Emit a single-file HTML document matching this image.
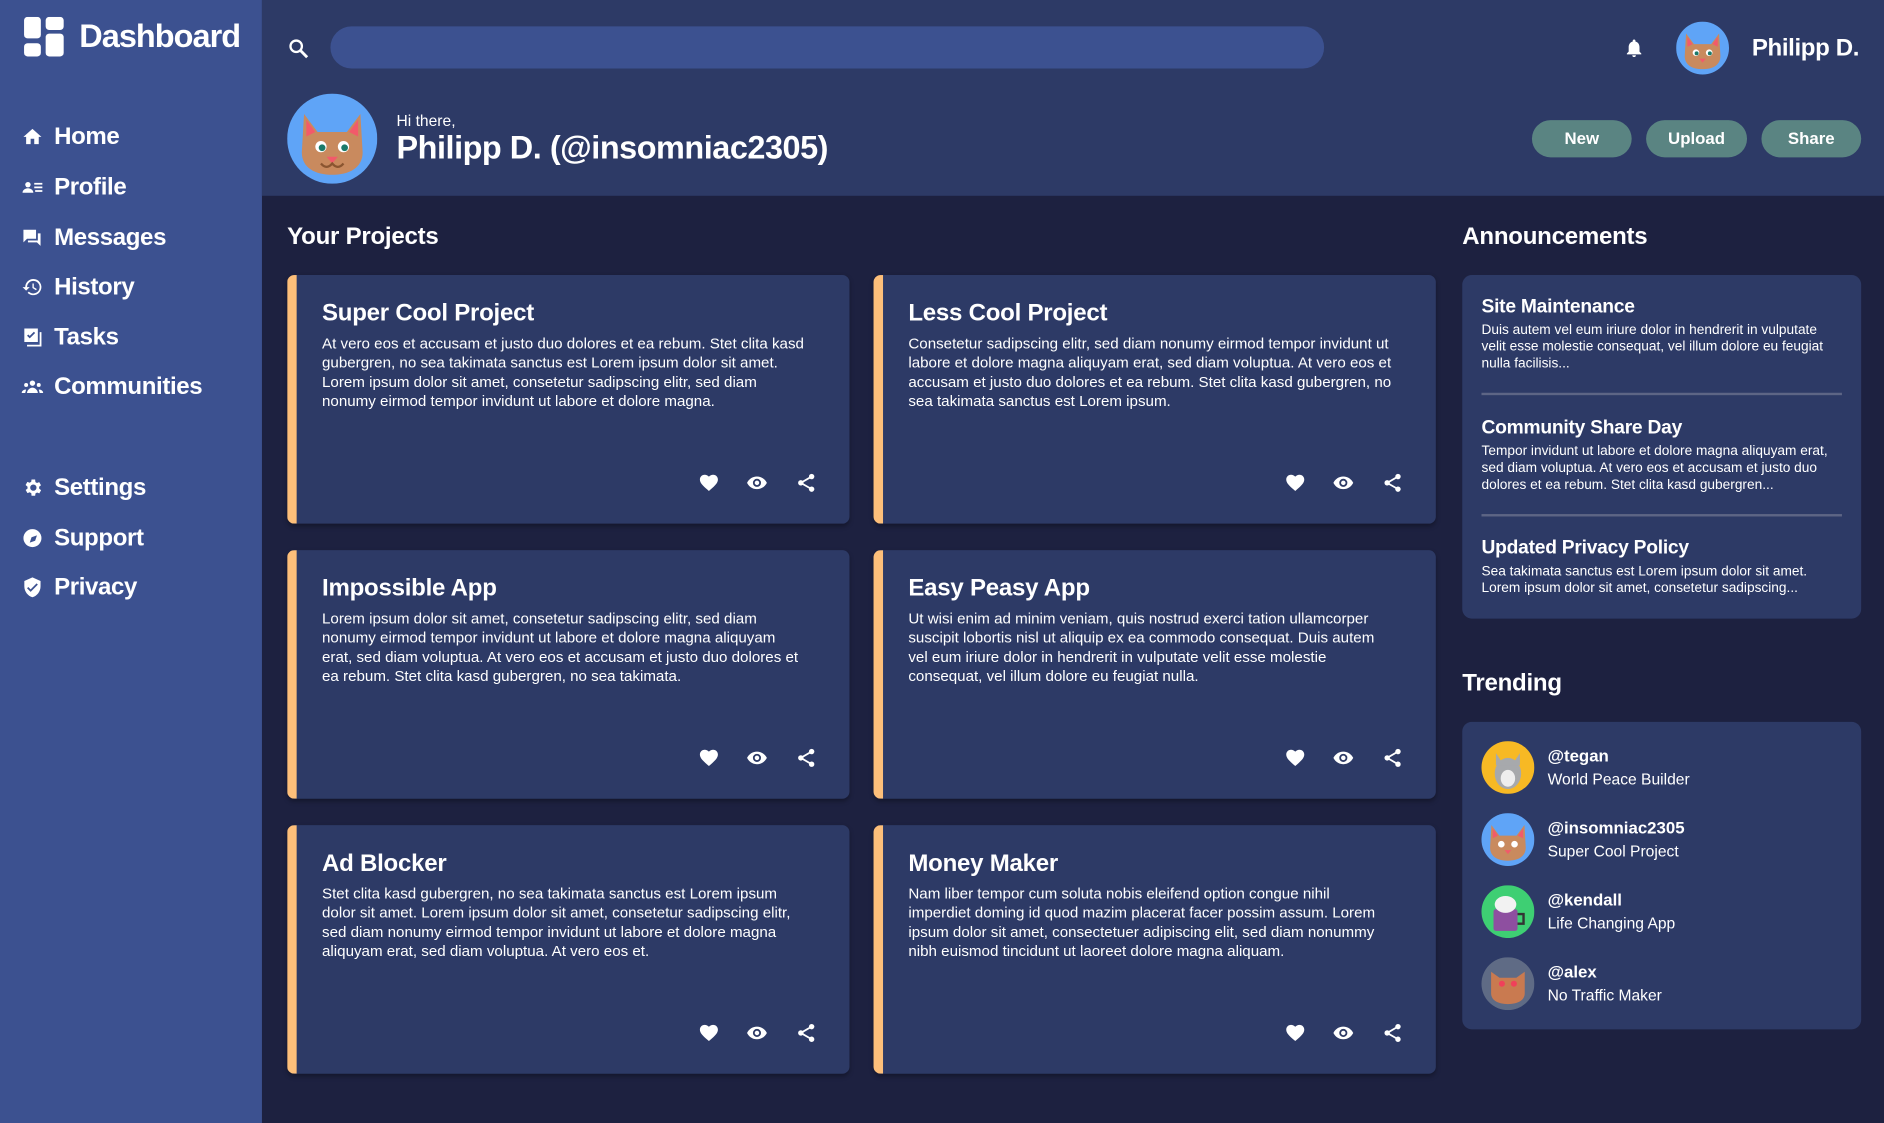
<!DOCTYPE html>
<html><head><meta charset="utf-8"><style>
html,body{margin:0;padding:0;width:1884px;height:1123px;overflow:hidden;background:#1d2140;}
#w{position:absolute;left:0;top:0;width:1568px;height:935px;transform:scale(1.20153,1.2011);transform-origin:0 0;font-family:"Liberation Sans",sans-serif;color:#fff;background:#1d2140;}
.a{position:absolute;}
#side{left:0;top:0;width:218px;height:935px;background:#3c5190;}
.nav{position:absolute;left:18px;font-size:20px;font-weight:bold;display:flex;align-items:center;height:24px;letter-spacing:-0.3px;}
.nav svg{width:18px;height:18px;margin-right:9px;fill:#fff;}
#head{left:218px;top:0;width:1350px;height:163px;background:#2d3a66;}
.btn{position:absolute;top:100px;height:31px;border-radius:16px;background:#5a8482;font-size:14px;font-weight:bold;text-align:center;line-height:31px;}
.card{position:absolute;width:460px;height:207px;background:#2d3a66;border-radius:6px;border-left:8px solid #fdbf7a;box-shadow:0 2px 4px rgba(0,0,0,.3);}
.card h3{margin:0;position:absolute;left:21px;top:21px;font-size:20px;letter-spacing:-0.2px;}
.card p{margin:0;position:absolute;left:21px;top:49px;width:405px;font-size:12.6px;line-height:16px;}
.ic{position:absolute;top:164px;width:18px;height:18px;fill:#fff;}
.h2{position:absolute;font-size:20px;font-weight:bold;letter-spacing:-0.2px;}
.panel{position:absolute;left:1217px;width:332px;background:#2d3a66;border-radius:8px;}
.an{position:absolute;left:16px;width:290px;}
.an b{font-size:16px;display:block;letter-spacing:-0.2px;}
.an span{font-size:11.4px;line-height:14px;display:block;margin-top:3px;}
.hr{position:absolute;left:16px;width:300px;height:2px;background:#5d6585;}
.tr{position:absolute;left:16px;height:44px;}
.tr .t{position:absolute;left:55px;top:4px;font-size:14px;font-weight:bold;white-space:nowrap;}
.tr .s{position:absolute;left:55px;top:24px;font-size:13px;white-space:nowrap;}
</style></head><body><div id="w">
<div id="side" class="a">
 <svg class="a" style="left:20px;top:14px" width="34" height="33" viewBox="0 0 34 33"><rect x="0" y="0" width="14" height="18" rx="3" fill="#fff"/><rect x="18" y="0" width="15" height="11" rx="3" fill="#fff"/><rect x="0" y="22" width="14" height="11" rx="3" fill="#fff"/><rect x="18" y="14" width="15" height="19" rx="3" fill="#fff"/></svg>
 <div class="a" style="left:66px;top:15px;font-size:27px;font-weight:bold;letter-spacing:-0.8px">Dashboard</div>
 <div class="nav" style="top:102px"><svg viewBox="0 0 24 24"><path d="M10 20v-6h4v6h5v-8h3L12 3 2 12h3v8z"/></svg>Home</div>
 <div class="nav" style="top:144px"><svg viewBox="0 0 24 24"><circle cx="7" cy="9" r="3"/><path d="M1 18c0-3 3-5 6-5s6 2 6 5zM14 7h9v2h-9zM14 11h9v2h-9zM15 15h8v2h-8z"/></svg>Profile</div>
 <div class="nav" style="top:186px"><svg viewBox="0 0 24 24"><path d="M2 3h14v10H6l-4 4zM18 7h3v14l-4-4H7v-2h11z"/></svg>Messages</div>
 <div class="nav" style="top:227px"><svg viewBox="0 0 24 24"><path d="M13 3a9 9 0 0 0-9 9H1l4 4 4-4H6a7 7 0 1 1 2 5l-1.4 1.4A9 9 0 1 0 13 3zm-1 5v5l4 2.5.8-1.3-3.3-2V8z"/></svg>History</div>
 <div class="nav" style="top:269px"><svg viewBox="0 0 24 24"><path d="M3 2h15v15H3zM6 10l3 3 6-6-1.4-1.4L9 10.2 7.4 8.6zM20 6h2v16H6v-2h14z"/></svg>Tasks</div>
 <div class="nav" style="top:310px"><svg viewBox="0 0 24 24"><circle cx="12" cy="8" r="3"/><circle cx="5" cy="10" r="2.2"/><circle cx="19" cy="10" r="2.2"/><path d="M6 19c0-3 3-6 6-6s6 3 6 6zM0 19c0-2 2-4 5-4l-1 4zM24 19c0-2-2-4-5-4l1 4z"/></svg>Communities</div>
 <div class="nav" style="top:394px"><svg viewBox="0 0 24 24"><path d="M19.4 13a7.5 7.5 0 0 0 0-2l2.1-1.6-2-3.5-2.5 1a7 7 0 0 0-1.7-1L15 3h-4l-.4 2.6a7 7 0 0 0-1.7 1l-2.5-1-2 3.5L6.6 11a7.5 7.5 0 0 0 0 2l-2.1 1.6 2 3.5 2.5-1a7 7 0 0 0 1.7 1L11 21h4l.4-2.6a7 7 0 0 0 1.7-1l2.5 1 2-3.5zM13 15.5a3.5 3.5 0 1 1 0-7 3.5 3.5 0 0 1 0 7z"/></svg>Settings</div>
 <div class="nav" style="top:436px"><svg viewBox="0 0 24 24"><path d="M12 2a10 10 0 1 0 0 20 10 10 0 0 0 0-20zm3 13-6 2 2-6 6-2z"/></svg>Support</div>
 <div class="nav" style="top:477px"><svg viewBox="0 0 24 24"><path d="M12 1 3 5v6c0 5.5 3.8 10.7 9 12 5.2-1.3 9-6.5 9-12V5zm-2 16-4-4 1.4-1.4L10 14.2l6.6-6.6L18 9z"/></svg>Privacy</div>
</div>
<div id="head" class="a"></div>
<svg class="a" style="left:239px;top:31px" width="19" height="19" viewBox="0 0 24 24"><circle cx="9.5" cy="9.5" r="6" stroke="#fff" stroke-width="2.4" fill="none"/><path d="M14 14l7 7" stroke="#fff" stroke-width="3"/></svg>
<div class="a" style="left:275px;top:22px;width:827px;height:35px;border-radius:18px;background:#3c5190"></div>
<svg class="a" style="left:1351px;top:30px" width="18" height="20" viewBox="0 0 24 24" fill="#fff"><path d="M12 22a2 2 0 0 0 2-2h-4a2 2 0 0 0 2 2zm6-6v-5c0-3-1.6-5.6-4.5-6.3V4a1.5 1.5 0 0 0-3 0v.7C7.6 5.4 6 8 6 11v5l-2 2v1h16v-1z"/></svg>
<svg class="a" style="left:1395px;top:18px" width="44" height="44" viewBox="0 0 80 80"><circle cx="40" cy="40" r="40" fill="#5fa4f7"/><path d="M15 18l12 16 26 0 12-16 2 34c0 14-12 20-27 20S13 66 13 52z" fill="#c98a5e"/><path d="M17 23l8 11-8 4zM63 23l-8 11 8 4z" fill="#f25a6a"/><circle cx="30" cy="47" r="5" fill="#fff"/><circle cx="50" cy="47" r="5" fill="#fff"/><circle cx="31" cy="48" r="3" fill="#1a7a6a"/><circle cx="51" cy="48" r="3" fill="#1a7a6a"/><path d="M35 56h10l-5 6z" fill="#f25a6a"/></svg>
<div class="a" style="left:1458px;top:29px;font-size:20px;font-weight:bold;letter-spacing:-0.3px">Philipp D.</div>
<svg class="a" style="left:239px;top:78px" width="75" height="75" viewBox="0 0 80 80"><circle cx="40" cy="40" r="40" fill="#5fa4f7"/><path d="M15 18l12 16 26 0 12-16 2 34c0 14-12 20-27 20S13 66 13 52z" fill="#c98a5e"/><path d="M17 23l8 11-8 4zM63 23l-8 11 8 4z" fill="#f25a6a"/><circle cx="30" cy="47" r="5" fill="#fff"/><circle cx="50" cy="47" r="5" fill="#fff"/><circle cx="31" cy="48" r="3" fill="#1a7a6a"/><circle cx="51" cy="48" r="3" fill="#1a7a6a"/><path d="M35 56h10l-5 6z" fill="#f25a6a"/><path d="M30 62q5 6 10 0q5 6 10 0" stroke="#8a5530" stroke-width="2" fill="none"/></svg>
<div class="a" style="left:330px;top:93px;font-size:13px">Hi there,</div>
<div class="a" style="left:330px;top:108px;font-size:27px;font-weight:bold;letter-spacing:-0.4px">Philipp D. (@insomniac2305)</div>
<div class="btn" style="left:1275px;width:83px">New</div>
<div class="btn" style="left:1370px;width:84px">Upload</div>
<div class="btn" style="left:1466px;width:83px">Share</div>

<div class="h2" style="left:239px;top:186px">Your Projects</div>
<div class="h2" style="left:1217px;top:186px">Announcements</div>
<div class="h2" style="left:1217px;top:558px">Trending</div>

<div class="card" style="left:239px;top:229px"><h3>Super Cool Project</h3><p>At vero eos et accusam et justo duo dolores et ea rebum. Stet clita kasd gubergren, no sea takimata sanctus est Lorem ipsum dolor sit amet. Lorem ipsum dolor sit amet, consetetur sadipscing elitr, sed diam nonumy eirmod tempor invidunt ut labore et dolore magna.</p>ICONS</div>
<div class="card" style="left:727px;top:229px"><h3>Less Cool Project</h3><p>Consetetur sadipscing elitr, sed diam nonumy eirmod tempor invidunt ut labore et dolore magna aliquyam erat, sed diam voluptua. At vero eos et accusam et justo duo dolores et ea rebum. Stet clita kasd gubergren, no sea takimata sanctus est Lorem ipsum.</p>ICONS</div>
<div class="card" style="left:239px;top:458px"><h3>Impossible App</h3><p>Lorem ipsum dolor sit amet, consetetur sadipscing elitr, sed diam nonumy eirmod tempor invidunt ut labore et dolore magna aliquyam erat, sed diam voluptua. At vero eos et accusam et justo duo dolores et ea rebum. Stet clita kasd gubergren, no sea takimata.</p>ICONS</div>
<div class="card" style="left:727px;top:458px"><h3>Easy Peasy App</h3><p>Ut wisi enim ad minim veniam, quis nostrud exerci tation ullamcorper suscipit lobortis nisl ut aliquip ex ea commodo consequat. Duis autem vel eum iriure dolor in hendrerit in vulputate velit esse molestie consequat, vel illum dolore eu feugiat nulla.</p>ICONS</div>
<div class="card" style="left:239px;top:687px"><h3>Ad Blocker</h3><p>Stet clita kasd gubergren, no sea takimata sanctus est Lorem ipsum dolor sit amet. Lorem ipsum dolor sit amet, consetetur sadipscing elitr, sed diam nonumy eirmod tempor invidunt ut labore et dolore magna aliquyam erat, sed diam voluptua. At vero eos et.</p>ICONS</div>
<div class="card" style="left:727px;top:687px"><h3>Money Maker</h3><p>Nam liber tempor cum soluta nobis eleifend option congue nihil imperdiet doming id quod mazim placerat facer possim assum. Lorem ipsum dolor sit amet, consectetuer adipiscing elit, sed diam nonummy nibh euismod tincidunt ut laoreet dolore magna aliquam.</p>ICONS</div>

<div class="panel" style="top:229px;height:286px">
 <div class="an" style="top:18px"><b>Site Maintenance</b><span>Duis autem vel eum iriure dolor in hendrerit in vulputate velit esse molestie consequat, vel illum dolore eu feugiat nulla facilisis...</span></div>
 <div class="hr" style="top:98px"></div>
 <div class="an" style="top:119px"><b>Community Share Day</b><span>Tempor invidunt ut labore et dolore magna aliquyam erat, sed diam voluptua. At vero eos et accusam et justo duo dolores et ea rebum. Stet clita kasd gubergren...</span></div>
 <div class="hr" style="top:199px"></div>
 <div class="an" style="top:219px"><b>Updated Privacy Policy</b><span>Sea takimata sanctus est Lorem ipsum dolor sit amet. Lorem ipsum dolor sit amet, consetetur sadipscing...</span></div>
</div>
<div class="panel" style="top:601px;height:256px">
 <div class="tr" style="top:16px"><svg width="44" height="44" viewBox="0 0 44 44"><circle cx="22" cy="22" r="22" fill="#f7b924"/><ellipse cx="22" cy="27" rx="11" ry="13" fill="#a7a9ac"/><ellipse cx="22" cy="31" rx="6" ry="7" fill="#eee"/><path d="M12 10l4 6h12l4-6v10H12z" fill="#a7a9ac"/></svg><div class="t">@tegan</div><div class="s">World Peace Builder</div></div>
 <div class="tr" style="top:76px"><svg width="44" height="44" viewBox="0 0 80 80"><circle cx="40" cy="40" r="40" fill="#5fa4f7"/><path d="M15 18l12 16 26 0 12-16 2 34c0 14-12 20-27 20S13 66 13 52z" fill="#c98a5e"/><path d="M17 23l8 11-8 4zM63 23l-8 11 8 4z" fill="#f25a6a"/><circle cx="30" cy="47" r="5" fill="#fff"/><circle cx="50" cy="47" r="5" fill="#fff"/><path d="M35 56h10l-5 6z" fill="#f25a6a"/></svg><div class="t">@insomniac2305</div><div class="s">Super Cool Project</div></div>
 <div class="tr" style="top:136px"><svg width="44" height="44" viewBox="0 0 44 44"><circle cx="22" cy="22" r="22" fill="#3ecf73"/><rect x="10" y="20" width="20" height="18" rx="2" fill="#8e4fa0"/><ellipse cx="20" cy="16" rx="9" ry="7" fill="#f2f2f2"/><path d="M30 24h5v8h-5" stroke="#333" stroke-width="2" fill="none"/></svg><div class="t">@kendall</div><div class="s">Life Changing App</div></div>
 <div class="tr" style="top:196px"><svg width="44" height="44" viewBox="0 0 44 44"><circle cx="22" cy="22" r="22" fill="#5f6b85"/><path d="M8 12l7 5h14l7-5v18c0 6-6 9-14 9S8 36 8 30z" fill="#c97a50"/><circle cx="17" cy="22" r="2.5" fill="#f0405a"/><circle cx="27" cy="22" r="2.5" fill="#f0405a"/></svg><div class="t">@alex</div><div class="s">No Traffic Maker</div></div>
</div>
</div>
<script>
var ic='<svg class="ic" style="left:334px" viewBox="0 0 24 24"><path d="M12 21l-1.5-1.3C5 15 2 12 2 8.3 2 5.3 4.3 3 7.3 3c1.7 0 3.4.8 4.7 2.1C13.3 3.8 15 3 16.7 3 19.7 3 22 5.3 22 8.3c0 3.7-3 6.7-8.5 11.4z"/></svg><svg class="ic" style="left:374px" viewBox="0 0 24 24"><path d="M12 5C7 5 3 8 1 12c2 4 6 7 11 7s9-3 11-7c-2-4-6-7-11-7zm0 11.5a4.5 4.5 0 1 1 0-9 4.5 4.5 0 0 1 0 9zm0-7a2.5 2.5 0 1 0 0 5 2.5 2.5 0 0 0 0-5z"/></svg><svg class="ic" style="left:415px" viewBox="0 0 24 24"><circle cx="18" cy="5" r="3"/><circle cx="6" cy="12" r="3"/><circle cx="18" cy="19" r="3"/><path d="M6 12L18 5M6 12l12 7" stroke="#fff" stroke-width="2"/></svg>';
document.querySelectorAll('.card').forEach(function(c){c.innerHTML=c.innerHTML.replace('ICONS',ic);});
</script>
</body></html>
